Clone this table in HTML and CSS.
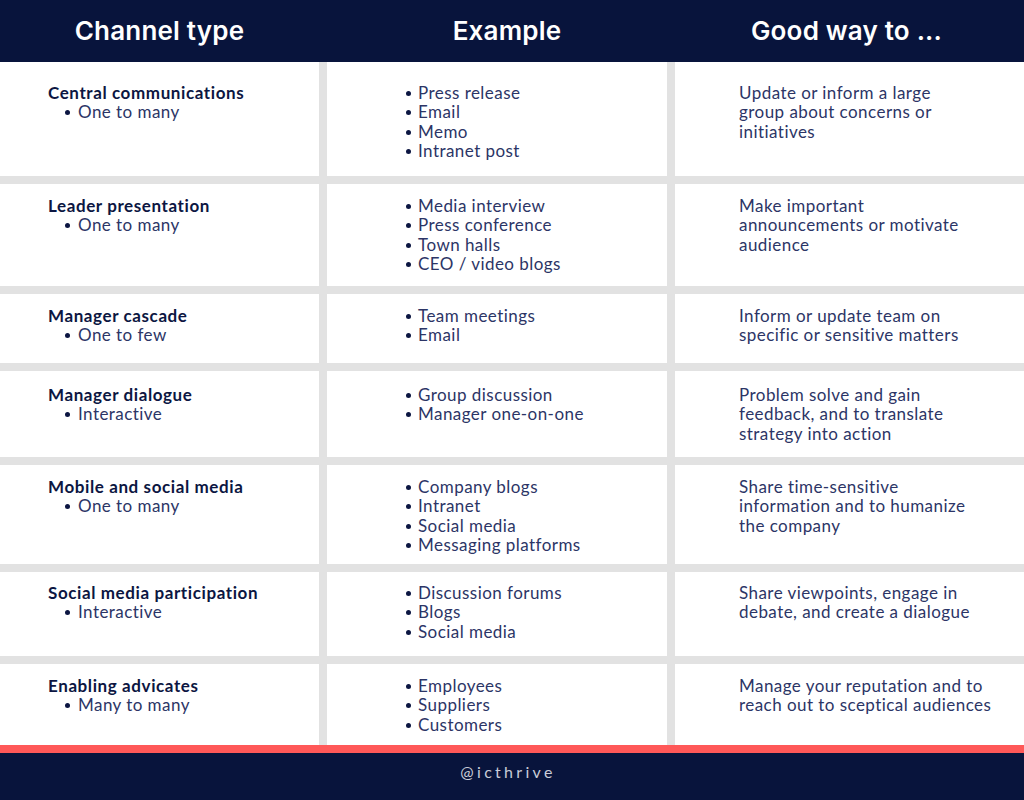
FILE: index.html
```html
<!DOCTYPE html>
<html lang="en">
<head>
<meta charset="utf-8">
<title>Channel types</title>
<link rel="stylesheet" href="styles.css">
</head>
<body>
<div class="page">
  <header class="head">
    <div class="hcell">Channel type</div>
    <div class="hcell">Example</div>
    <div class="hcell">Good way to ...</div>
  </header>
  <main class="grid">
    <div class="cell c1 first"><div class="title">Central communications</div><ul class="sub"><li>One to many</li></ul></div>
    <div class="cell c2 first"><ul class="list"><li>Press release</li><li>Email</li><li>Memo</li><li>Intranet post</li></ul></div>
    <div class="cell c3 first"><p>Update or inform a large<br>group about concerns or<br>initiatives</p></div>

    <div class="cell c1"><div class="title">Leader presentation</div><ul class="sub"><li>One to many</li></ul></div>
    <div class="cell c2"><ul class="list"><li>Media interview</li><li>Press conference</li><li>Town halls</li><li>CEO / video blogs</li></ul></div>
    <div class="cell c3"><p>Make important<br>announcements or motivate<br>audience</p></div>

    <div class="cell c1"><div class="title">Manager cascade</div><ul class="sub"><li>One to few</li></ul></div>
    <div class="cell c2"><ul class="list"><li>Team meetings</li><li>Email</li></ul></div>
    <div class="cell c3"><p>Inform or update team on<br>specific or sensitive matters</p></div>

    <div class="cell c1 loose"><div class="title">Manager dialogue</div><ul class="sub"><li>Interactive</li></ul></div>
    <div class="cell c2 loose"><ul class="list"><li>Group discussion</li><li>Manager one-on-one</li></ul></div>
    <div class="cell c3 loose"><p>Problem solve and gain<br>feedback, and to translate<br>strategy into action</p></div>

    <div class="cell c1"><div class="title">Mobile and social media</div><ul class="sub"><li>One to many</li></ul></div>
    <div class="cell c2"><ul class="list"><li>Company blogs</li><li>Intranet</li><li>Social media</li><li>Messaging platforms</li></ul></div>
    <div class="cell c3"><p>Share time-sensitive<br>information and to humanize<br>the company</p></div>

    <div class="cell c1 tight"><div class="title">Social media participation</div><ul class="sub"><li>Interactive</li></ul></div>
    <div class="cell c2 tight"><ul class="list"><li>Discussion forums</li><li>Blogs</li><li>Social media</li></ul></div>
    <div class="cell c3 tight"><p>Share viewpoints, engage in<br>debate, and create a dialogue</p></div>

    <div class="cell c1"><div class="title">Enabling advicates</div><ul class="sub"><li>Many to many</li></ul></div>
    <div class="cell c2"><ul class="list"><li>Employees</li><li>Suppliers</li><li>Customers</li></ul></div>
    <div class="cell c3"><p>Manage your reputation and to<br>reach out to sceptical audiences</p></div>
  </main>
  <footer class="foot">@icthrive</footer>
</div>
</body>
</html>
```
FILE: styles.css
```css
* { box-sizing: border-box; }
html, body { margin: 0; padding: 0; }
body {
  font-family: "Lato", "Open Sans", sans-serif;
  background: #ffffff;
  color: #2c3566;
}
.page { width: 1024px; height: 800px; display: flex; flex-direction: column; }
.head {
  height: 62px;
  background: #08143c;
  display: grid;
  grid-template-columns: 319px 348px 1fr;
  column-gap: 8px;
}
.hcell {
  display: flex;
  align-items: center;
  justify-content: center;
  color: #ffffff;
  font-family: "Inter", "Lato", sans-serif;
  font-weight: 600;
  font-size: 26px;
  letter-spacing: 0.2px;
  padding-bottom: 2px;
}
.hcell:nth-child(2) { padding-left: 12px; }
.hcell:nth-child(3) { padding-right: 14px; }
.grid {
  display: grid;
  grid-template-columns: 319px 340px 1fr;
  grid-template-rows: 114px 102px 69px 86px 99px 84px 81px;
  gap: 8px;
  background: #e2e2e2;
  height: 683px;
}
.cell {
  background: #ffffff;
  padding-top: 12px;
  font-size: 17px;
  line-height: 19.4px;
  letter-spacing: 0.45px;
}
.cell.first { padding-top: 21px; }
.cell.loose { padding-top: 14px; }
.cell.tight { padding-top: 11px; }
.c1 { padding-left: 48px; }
.c2 { padding-left: 91px; }
.c3 { padding-left: 64px; padding-right: 10px; }
.title { font-weight: 700; color: #0c1642; letter-spacing: 0.6px; }
ul { margin: 0; padding: 0; list-style: none; }
li { position: relative; }
li::before {
  content: "";
  position: absolute;
  width: 5px;
  height: 5px;
  border-radius: 50%;
  background: #0c1642;
  top: 8px;
}
.sub { padding-left: 30px; }
.sub li::before { left: -13px; }
.list li::before { left: -12px; }
.c3 p { margin: 0; white-space: nowrap; }
.foot {
  height: 55px;
  background: #08143c;
  border-top: 8px solid #ff5858;
  color: #c9ccd8;
  display: flex;
  align-items: center;
  justify-content: center;
  font-size: 16px;
  letter-spacing: 3.3px;
  padding-bottom: 10px;
  padding-right: 8px;
}
```
